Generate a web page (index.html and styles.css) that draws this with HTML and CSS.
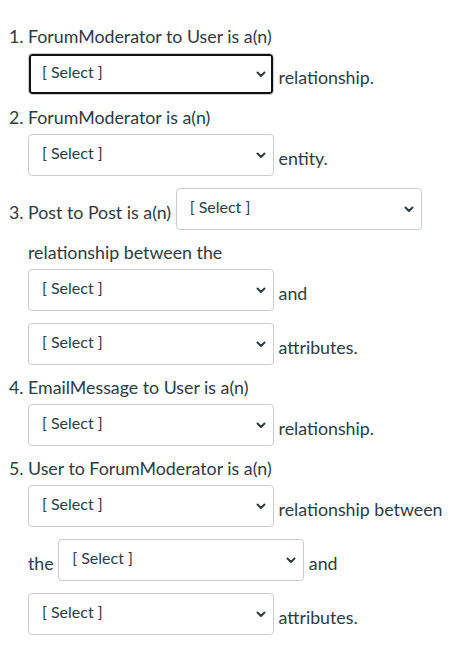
FILE: index.html
```html
<!DOCTYPE html>
<html>
<head>
<meta charset="utf-8">
<link rel="stylesheet" href="styles.css">
</head>
<body>
<ol class="quiz">
  <li class="item"><span class="num">1.</span><div class="body">ForumModerator to User is a(n) <select class="pick focused"><option>[ Select ]</option></select> relationship.</div></li>
  <li class="item"><span class="num">2.</span><div class="body">ForumModerator is a(n) <select class="pick"><option>[ Select ]</option></select> entity.</div></li>
  <li class="item"><span class="num">3.</span><div class="body">Post to Post is a(n) <select class="pick"><option>[ Select ]</option></select> relationship between the <select class="pick"><option>[ Select ]</option></select> and <select class="pick"><option>[ Select ]</option></select> attributes.</div></li>
  <li class="item"><span class="num">4.</span><div class="body">EmailMessage to User is a(n) <select class="pick"><option>[ Select ]</option></select> relationship.</div></li>
  <li class="item"><span class="num">5.</span><div class="body">User to ForumModerator is a(n) <select class="pick"><option>[ Select ]</option></select> relationship between the <select class="pick"><option>[ Select ]</option></select> and <select class="pick"><option>[ Select ]</option></select> attributes.</div></li>
</ol>
</body>
</html>
```

FILE: styles.css
```css
html, body {
  margin: 0;
  background: #ffffff;
}
body {
  padding: 23px 8px 0 8px;
  font-family: Lato, "Open Sans", sans-serif;
  font-size: 17.8px;
  line-height: 27px;
  color: #2d3b45;
}
.quiz {
  list-style: none;
  margin: 0;
  padding: 0;
}
.item {
  display: grid;
  grid-template-columns: 20px 1fr;
  align-items: baseline;
}
.num {
  padding-left: 1px;
}
.pick {
  -webkit-appearance: none;
  appearance: none;
  box-sizing: border-box;
  width: 246px;
  height: 42px;
  margin: 3px 0 9px 0;
  padding: 0 30px 6px 13px;
  border: 1px solid #c7cdd1;
  border-radius: 4px;
  background-color: #ffffff;
  background-image: url("data:image/svg+xml,%3Csvg xmlns='http://www.w3.org/2000/svg' width='10' height='7' viewBox='0 0 10 7'%3E%3Cpath d='M1.5 1.5 L5 5 L8.5 1.5' fill='none' stroke='%232d3b45' stroke-width='2' stroke-linecap='round' stroke-linejoin='round'/%3E%3C/svg%3E");
  background-repeat: no-repeat;
  background-position: right 7px center;
  background-size: 10px 7px;
  font-family: Lato, "Open Sans", sans-serif;
  font-size: 16px;
  color: #2d3b45;
  vertical-align: 6px;
}
.focused {
  box-shadow: inset 0 0 0 2px #111111;
}
```
